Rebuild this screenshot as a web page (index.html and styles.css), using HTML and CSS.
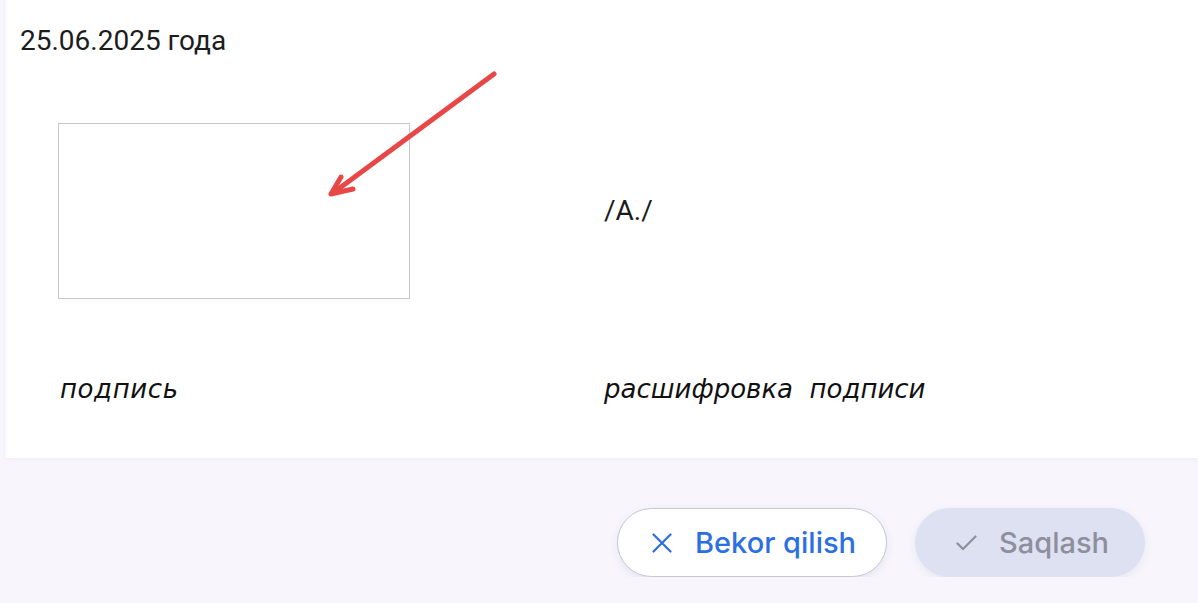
FILE: index.html
```html
<!DOCTYPE html>
<html lang="ru">
<head>
    <meta charset="UTF-8">
    <meta name="viewport" content="width=device-width, initial-scale=1.0">
    <title>Подпись</title>
    <link rel="stylesheet" href="styles.css">
</head>
<body>
    <div class="sheet">
        <div class="doc-date">25.06.2025 года</div>

        <div class="sign-grid">
            <div class="sign-box"></div>
            <div class="sign-name">/A./</div>
            <div class="sign-label sign-label-left">подпись</div>
            <div class="sign-label">расшифровка&nbsp; подписи</div>
        </div>

        <!-- annotation arrow over the signature box -->
        <svg class="hint-arrow" width="200" height="150" viewBox="0 0 200 150">
            <path d="M182 14 L21 133" />
            <path d="M29 117 L19 134 L41 129" />
        </svg>
    </div>

    <div class="actions">
        <button class="btn btn-cancel" type="button">
            <svg class="btn-icon" width="20" height="20" viewBox="0 0 20 20">
                <path d="M1.5 1.5 L18.5 18.5 M18.5 1.5 L1.5 18.5" />
            </svg>
            Bekor qilish
        </button>
        <button class="btn btn-save" type="button" disabled>
            <svg class="btn-icon" width="21" height="20" viewBox="0 0 21 20">
                <path d="M1.5 10.5 L7 16 L19.5 3.5" />
            </svg>
            Saqlash
        </button>
    </div>
</body>
</html>
```

FILE: styles.css
```css
body {
    margin: 0;
    background-color: #f8f6fc;
    font-family: Roboto, "Noto Sans", sans-serif;
    color: #1c1c1c;
}
.sheet {
    position: relative;
    margin-left: 6px;
    height: 458px;
    box-sizing: border-box;
    padding: 25px 0 0 14px;
    background-color: #ffffff;
    box-shadow: 0 2px 6px rgba(120, 110, 170, 0.06);
}
.doc-date {
    font-size: 28px;
    line-height: 32px;
}
.sign-grid {
    display: grid;
    grid-template-columns: 546px 1fr;
    row-gap: 74px;
    align-items: center;
    margin-top: 66px;
    padding-left: 38px;
}
.sign-box {
    width: 350px;
    height: 174px;
    border: 1px solid #c9c9c9;
}
.sign-name {
    font-size: 28px;
    line-height: 32px;
}
.sign-label {
    font-family: "DejaVu Sans", sans-serif;
    font-style: italic;
    font-size: 26px;
    line-height: 32px;
    color: #111111;
}
.sign-label-left {
    margin-left: 2px;
    letter-spacing: 0.6px;
}
.hint-arrow {
    position: absolute;
    left: 306px;
    top: 60px;
    fill: none;
    stroke: #e84747;
    stroke-width: 5;
    stroke-linecap: round;
    stroke-linejoin: round;
}
.actions {
    display: flex;
    justify-content: flex-end;
    gap: 28px;
    padding: 50px 53px 0 0;
}
.btn {
    display: flex;
    align-items: center;
    box-sizing: border-box;
    height: 69px;
    border-radius: 35px;
    font-family: Inter, "Noto Sans", sans-serif;
    font-size: 29px;
    font-weight: 500;
    cursor: pointer;
}
.btn-icon {
    fill: none;
    stroke: currentColor;
    stroke-width: 2.2;
    stroke-linecap: round;
    stroke-linejoin: round;
}
.btn-cancel {
    gap: 23px;
    width: 270px;
    padding: 0 0 0 34px;
    color: #2b6fe3;
    background-color: #ffffff;
    border: 1px solid #c4c7d9;
    box-shadow: 0 3px 8px rgba(90, 90, 140, 0.12);
}
.btn-save {
    gap: 22px;
    width: 230px;
    padding: 0 0 0 40px;
    color: #8e8f9d;
    background-color: #dde1f1;
    border: 1px solid #dde1f1;
    box-shadow: 0 3px 8px rgba(90, 90, 140, 0.1);
    cursor: default;
}
```
